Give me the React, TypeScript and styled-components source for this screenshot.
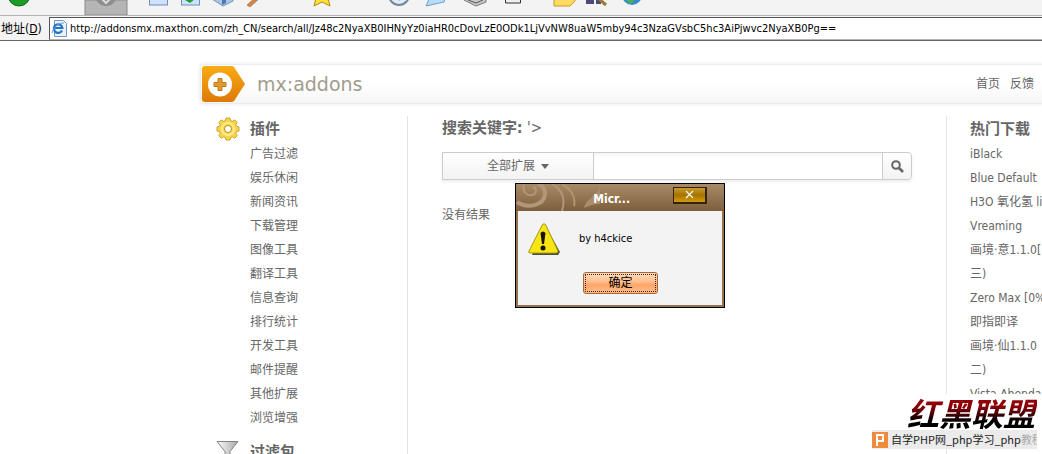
import React from "react";
import styled, { createGlobalStyle, css } from "styled-components";

const GlobalStyle = createGlobalStyle`
  * { box-sizing: border-box; }
  html, body { margin: 0; height: 100%; overflow: hidden; background: #fff; }
  body { font: 12px/24px "DejaVu Sans Condensed", "Noto Sans CJK SC", sans-serif; color: #666; }
  ul, h1, h2, p { margin: 0; padding: 0; list-style: none; font-weight: normal; }
  a { color: inherit; text-decoration: none; }
  button, input { font: inherit; color: inherit; }
`;

const Screen = styled.div`
  position: relative;
  height: 100vh;
  overflow: hidden;
  display: flex;
  flex-direction: column;
`;

const Toolbar = styled.div`
  flex: none;
  height: 16px;
  background: #f3f3f3;
  border-bottom: 1px solid #b4b4b4;
  overflow: hidden;
  svg { display: block; }
`;

const AddressBar = styled.div`
  flex: none;
  display: flex;
  align-items: center;
  height: 25px;
  padding: 1px 0 0 1px;
  background: #f3f3f3;
  border-bottom: 1px solid #666;
  color: #000;
`;

const AddressLabel = styled.label`
  flex: none;
  width: 48px;
  white-space: nowrap;
`;

const AddressField = styled.div`
  flex: 1;
  display: flex;
  align-items: center;
  gap: 3px;
  height: 23px;
  padding-left: 1px;
  background: #fff;
  border: 1px solid #555;
  border-right: 0;
  border-bottom-color: #b4b4b4;
`;

const AddressInput = styled.input`
  flex: 1;
  min-width: 0;
  padding: 0;
  border: 0;
  outline: 0;
  background: none;
  font-size: 11px;
`;

const Page = styled.div`
  flex: 1;
  min-height: 0;
  padding: 23px 0 0 200px;
`;

const Header = styled.header`
  display: flex;
  align-items: center;
  height: 40px;
  padding: 0 8px 0 1px;
  border: 1px solid #ececec;
  border-right: 0;
  border-radius: 4px 0 0 4px;
  background: linear-gradient(#fff, #fff 50%, #f6f6f6);
  box-shadow: 0 0 3px 1px #f0f0f0;
`;

const Brand = styled.a`
  display: flex;
  align-items: center;
  gap: 12px;
  color: #a19c8e;
  font: 19px/36px "DejaVu Sans", sans-serif;
`;

const TopLinks = styled.nav`
  display: flex;
  gap: 10px;
  margin-left: auto;
`;

const Columns = styled.div`
  display: grid;
  grid-template-columns: 208px minmax(0, 1fr) 96px;
  margin-top: 12px;
  height: 100%;
`;

const Sidebar = styled.aside`
  padding: 1px 0 0 16px;
  border-right: 1px solid #e4e4e4;
`;

const Group = styled.section`
  display: flex;
  align-items: flex-start;
  gap: 10px;
  margin-bottom: 10px;
`;

const GroupIcon = styled.svg`
  flex: none;
`;

const Title = styled.h2`
  margin-bottom: 1px;
  font-size: 15px;
  line-height: 24px;
  font-weight: bold;
  white-space: nowrap;
`;

const Item = styled.li`
  white-space: nowrap;
`;

const Main = styled.main`
  padding: 0 34px;
`;

const Keyword = styled.span`
  font-weight: normal;
`;

const SearchForm = styled.form`
  display: flex;
  height: 28px;
  margin: 12px 0 23px;
  border: 1px solid #ccc;
  border-radius: 0 4px 4px 0;
  box-shadow: 0 2px 3px #eee;
`;

const barButton = css`
  display: flex;
  align-items: center;
  justify-content: center;
  padding: 0;
  border: 0;
  background: linear-gradient(#fff, #f3f3f3);
`;

const ScopeButton = styled.button`
  ${barButton}
  gap: 6px;
  width: 151px;
  border-right: 1px solid #ccc;
`;

const SearchInput = styled.input`
  flex: 1;
  min-width: 0;
  border: 0;
  outline: 0;
  background: linear-gradient(#f6f6f6, #fff 5px);
`;

const SearchButton = styled.button`
  ${barButton}
  width: 29px;
  border-left: 1px solid #ccc;
  border-radius: 0 4px 4px 0;
`;

const Downloads = styled.aside`
  padding: 1px 0 0 23px;
  border-left: 1px solid #e4e4e4;
  overflow: hidden;
`;

const Dialog = styled.div`
  position: absolute;
  left: 515px;
  top: 183px;
  width: 210px;
  height: 125px;
  border: 1px solid #000;
  outline: 0;
  background: #f3f3f3;
  box-shadow: inset 0 0 0 2px #927250;
  color: #000;
`;

const DialogBar = styled.div`
  position: relative;
  display: flex;
  align-items: flex-start;
  justify-content: flex-end;
  gap: 43px;
  height: 27px;
  padding: 3px 17px 0 0;
  background: linear-gradient(#a98a66, #7e5f3d);
`;

const Flourish = styled.svg`
  position: absolute;
  left: 0;
  top: 0;
`;

const DialogTitle = styled.h1`
  position: relative;
  color: #fff;
  font-size: 12px;
  line-height: 24px;
  font-weight: bold;
`;

const CloseButton = styled.button`
  position: relative;
  display: flex;
  align-items: center;
  justify-content: center;
  width: 34px;
  height: 17px;
  padding: 0;
  border: 2px solid #352208;
  border-width: 1px 2px 2px 1px;
  background: linear-gradient(#c89a34, #a87200 50%, #d29a10);
`;

const DialogBody = styled.div`
  display: flex;
  align-items: center;
  gap: 19px;
  height: 56px;
  padding-left: 12px;
  font-size: 11px;
`;

const OkButton = styled.button`
  display: block;
  width: 75px;
  height: 22px;
  margin: 5px 0 0 67px;
  padding: 0;
  border: 1px solid #a5683c;
  border-radius: 3px;
  background: linear-gradient(#ffdcbc, #ffbd8c 45%, #ffa566 60%, #ffc08c);
  outline: 1px dotted #40200a;
  outline-offset: -3px;
  line-height: 20px;
`;

const Watermark = styled.div`
  position: absolute;
  right: 0;
  bottom: 5px;
  width: 172px;
  padding-right: 5px;
  background: #fff;
`;

const Seal = styled.p`
  padding-right: 2px;
  font: italic 700 32px/36px "Noto Sans CJK SC", sans-serif;
  text-align: right;
  white-space: nowrap;
  background: linear-gradient(#a00008, #8a0008 35%, #000 75%);
  background-clip: text;
  -webkit-background-clip: text;
  color: transparent;
`;

const Strip = styled.p`
  display: flex;
  align-items: center;
  gap: 3px;
  height: 19px;
  margin-left: 2px;
  overflow: hidden;
  background: #ebebeb;
  color: #222;
  font: 11px/19px "Noto Sans CJK SC", sans-serif;
  white-space: nowrap;
  svg { flex: none; }
`;

const Faded = styled.span`
  color: #aaa;
`;

const categories = [
  "广告过滤", "娱乐休闲", "新闻资讯", "下载管理", "图像工具", "翻译工具",
  "信息查询", "排行统计", "开发工具", "邮件提醒", "其他扩展", "浏览增强",
];

const downloads = [
  "iBlack", "Blue Default", "H3O 氧化氢 lite", "Vreaming", "画境·意1.1.0[", "三)",
  "Zero Max [0%]", "即指即译", "画境·仙1.1.0", "二)", "Vista-Abenda",
];

const ToolbarIcons = () => (
  <svg width="660" height="15" viewBox="0 0 660 15">
    <rect x="85" width="42" height="15" fill="#b5b5b5" stroke="#8a8a8a" />
    <circle cx="19" cy="-5" r="11" fill="#1d9b25" stroke="#0c6d14" />
    <circle cx="106" cy="-5" r="11" fill="#8d8d8d" />
    <path d="M102-1l4 4 5-5" fill="none" stroke="#ddd" strokeWidth="2" />
    <rect x="149.500" y="-8" width="18" height="13" fill="#cfe2fb" stroke="#6f8fc4" />
    <rect x="181.500" y="-8" width="18" height="13" fill="#cfe2fb" stroke="#6f8fc4" />
    <path d="M185 0l5 3 5-4v-3h-9z" fill="#239b36" />
    <path d="M212-1l11 7 10-5v-5h-21z" fill="#a8c8e8" stroke="#7591b4" />
    <path d="M222 0v5l4-2v-5z" fill="#4c78b8" />
    <path d="M247 5l10-9 3 2-10 9z" fill="#d3844a" stroke="#8d5a30" strokeWidth=".5" />
    <path d="M314 6l2-8h12l2 8-8-4z" fill="#ffdf3a" stroke="#b08a10" />
    <circle cx="399" cy="-5" r="10" fill="#dfe9f4" stroke="#71869d" strokeWidth="2" />
    <path d="M396-4l4 5v-6z" fill="#35a43c" />
    <path d="M426 6l4-9 16-1-2 6z" fill="#b7dcf8" stroke="#6ba1d0" />
    <path d="M464 0l12 6 10-4v-6h-22z" fill="#c9c9c9" stroke="#777" />
    <path d="M468 0l8 3 7-3" stroke="#555" fill="none" />
    <path d="M505.500-2v5h15v-5" fill="#eee" stroke="#333" />
    <path d="M554-3v9h16l5-5v-5z" fill="#ffdb61" stroke="#c99822" />
    <path d="M586-3h8v7h-8z M596-3h5v7h-5z" fill="#4a4a78" />
    <path d="M598-2l8 7" stroke="#9e7a32" strokeWidth="3" />
    <circle cx="632" cy="-5" r="10" fill="#368bd0" />
    <path d="M626 0l5 4 4-5z" fill="#4eb34c" />
  </svg>
);

const PageIcon = () => (
  <svg width="16" height="17" viewBox="0 0 16 17">
    <path d="M3.500 .5h9l3 3v13h-12z" fill="#e8f2fd" stroke="#7895bb" />
    <path d="M11 10.500a4.300 4.300 0 1 1 .4-2.500H4" fill="none" stroke="#2474c2" strokeWidth="2.200" />
    <path d="M1 13c2-7 7-10 12-10" fill="none" stroke="#5aa5df" />
  </svg>
);

const LogoMark = () => (
  <svg width="43" height="36" viewBox="0 0 43 36">
    <defs>
      <linearGradient id="mark" x2="0" y2="1">
        <stop stopColor="#f8ab13" />
        <stop offset="1" stopColor="#dd7908" />
      </linearGradient>
    </defs>
    <path d="M3 0h26q2 0 3 1l11 17-11 17q-1 1-3 1H3q-3 0-3-3V3q0-3 3-3z" fill="url(#mark)" />
    <circle cx="18" cy="18.500" r="12" fill="#fff" />
    <path d="M16 12.500h4v4h4v4h-4v4h-4v-4h-4v-4h4z" fill="#e49a27" stroke="#b97a22" />
  </svg>
);

const Gear = () => (
  <GroupIcon width="24" height="24" viewBox="0 0 24 24">
    <path
      d="M9.500 3.500l.5-2.500h4l.5 2.500 2 .8 2.200-1.400 2.500 2.500-1.400 2.300.8 1.800 2.400.5v4l-2.400.5-.8 2 1.400 2.200-2.500 2.500-2.200-1.400-2 .8-.5 2.400h-4l-.5-2.400-2-.8-2.200 1.400-2.500-2.500 1.400-2.200-.8-2L1 14v-4l2.400-.5.8-1.800-1.400-2.300 2.500-2.500 2.200 1.400z"
      fill="#fbd548" stroke="#cda32e" strokeLinejoin="round"
    />
    <circle cx="12" cy="12" r="6" fill="none" stroke="#ffea8c" strokeWidth="2" />
    <circle cx="12" cy="12" r="3.500" fill="#fff" stroke="#b98e22" />
  </GroupIcon>
);

const Funnel = () => (
  <GroupIcon width="24" height="24" viewBox="0 0 24 24">
    <defs>
      <linearGradient id="funnel">
        <stop stopColor="#fff" />
        <stop offset="1" stopColor="#a5a5a5" />
      </linearGradient>
    </defs>
    <path d="M1 1.500h21l-8 10v9l-5-3v-6z" fill="url(#funnel)" stroke="#858585" />
  </GroupIcon>
);

const Warning = () => (
  <svg width="32" height="32" viewBox="0 0 32 32">
    <path d="M17 2l15 27-2 3H4z" fill="#4d4d3a" />
    <path d="M14.500 1.500q1.500-1.500 3 0L30 28q0 2-2 2H2q-2 0-1-2z" fill="#f9e514" stroke="#a89a10" />
    <path d="M12.500 10q2.500-3 5 0l-1.500 11h-2z" fill="#151500" />
    <circle cx="15" cy="25" r="2.500" fill="#151500" />
  </svg>
);

export default function App() {
  return (
    <Screen>
      <GlobalStyle />
      <Toolbar><ToolbarIcons /></Toolbar>
      <AddressBar>
        <AddressLabel htmlFor="address">地址(<u>D</u>)</AddressLabel>
        <AddressField>
          <PageIcon />
          <AddressInput
            id="address"
            defaultValue="http://addonsmx.maxthon.com/zh_CN/search/all/Jz48c2NyaXB0IHNyYz0iaHR0cDovLzE0ODk1LjVvNW8uaW5mby94c3NzaGVsbC5hc3AiPjwvc2NyaXB0Pg=="
          />
        </AddressField>
      </AddressBar>
      <Page>
        <Header>
          <Brand href="#"><LogoMark />mx:addons</Brand>
          <TopLinks><a href="#">首页</a><a href="#">反馈</a></TopLinks>
        </Header>
        <Columns>
          <Sidebar>
            <Group>
              <Gear />
              <div>
                <Title>插件</Title>
                <ul>{categories.map((c) => <Item key={c}><a href="#">{c}</a></Item>)}</ul>
              </div>
            </Group>
            <Group>
              <Funnel />
              <Title>过滤包</Title>
            </Group>
          </Sidebar>
          <Main>
            <Title>搜索关键字: <Keyword>'&gt;</Keyword></Title>
            <SearchForm onSubmit={(e) => e.preventDefault()}>
              <ScopeButton type="button">
                全部扩展
                <svg width="8" height="5" viewBox="0 0 8 5"><path d="M0 0h8L4 5z" fill="#666" /></svg>
              </ScopeButton>
              <SearchInput aria-label="搜索" />
              <SearchButton aria-label="搜索">
                <svg width="13" height="13" viewBox="0 0 13 13" fill="none" stroke="#666">
                  <circle cx="5" cy="5" r="3.800" strokeWidth="2" />
                  <path d="M8 8l4 4" strokeWidth="2.600" />
                </svg>
              </SearchButton>
            </SearchForm>
            <p>没有结果</p>
          </Main>
          <Downloads>
            <Title>热门下载</Title>
            <ul>{downloads.map((d) => <Item key={d}><a href="#">{d}</a></Item>)}</ul>
          </Downloads>
        </Columns>
      </Page>
      <Dialog role="alertdialog" aria-label="Micr...">
        <DialogBar>
          <Flourish width="90" height="27" viewBox="0 0 90 27" fill="none" stroke="#b2967a">
            <path d="M1 18c10 7 27 4 28-8 0-6-3-9-7-10" strokeWidth="4" />
            <path d="M8 0c-2 7 2 12 8 11 5-1 5-7 1-8" strokeWidth="2" />
            <path d="M36 0c9 5 14 14 10 27M46 0c9 5 14 13 12 22" strokeWidth="2" />
            <path d="M68 24c2-9 9-9 16-20v16q-8 0-16 4z" fill="#aa8d6d" stroke="none" />
          </Flourish>
          <DialogTitle>Micr...</DialogTitle>
          <CloseButton aria-label="关闭">
            <svg width="9" height="8" viewBox="0 0 9 8"><path d="M1 0l7 7M8 0L1 7" stroke="#fff" strokeWidth="1.200" /></svg>
          </CloseButton>
        </DialogBar>
        <DialogBody><Warning />by h4ckice</DialogBody>
        <OkButton>确定</OkButton>
      </Dialog>
      <Watermark>
        <Seal>红黑联盟</Seal>
        <Strip>
          <svg width="16" height="16" viewBox="0 0 16 16">
            <rect width="16" height="16" fill="#f08a3c" />
            <path d="M5 14V3h6v6H5" fill="none" stroke="#fff" strokeWidth="2" />
          </svg>
          <span>自学PHP网_php学习_php<Faded>教程</Faded></span>
        </Strip>
      </Watermark>
    </Screen>
  );
}
